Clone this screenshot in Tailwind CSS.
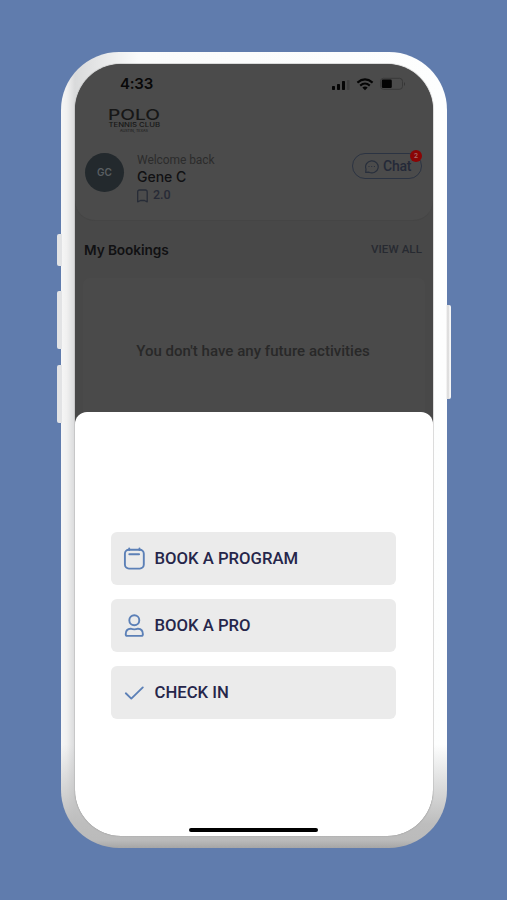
<!DOCTYPE html>
<html lang="en">
<head>
<meta charset="utf-8">
<title>Polo Tennis Club</title>
<script src="https://cdn.jsdelivr.net/npm/@tailwindcss/browser@4"></script>
</head>
<body class="bg-[#607cad]">
<div class="relative w-[507px] h-[900px] overflow-hidden pt-[52px] pl-[61px] font-[Roboto,sans-serif]">
  <!-- side buttons -->
  <div class="absolute left-[57px] top-[234px] w-[5px] h-[32px] rounded-l-[2px] bg-[#e2e3e5]"></div>
  <div class="absolute left-[57px] top-[291px] w-[5px] h-[58px] rounded-l-[2px] bg-[#e2e3e5]"></div>
  <div class="absolute left-[57px] top-[365px] w-[5px] h-[58px] rounded-l-[2px] bg-[#e2e3e5]"></div>
  <div class="absolute left-[446px] top-[305px] w-[5px] h-[94px] rounded-r-[2px] bg-[linear-gradient(90deg,#fbfbfb_0%,#d5d5d5_40%,#f6f6f6_75%)]"></div>

  <!-- device frame -->
  <div class="w-[386px] h-[796px] rounded-[58px] pt-[12px] pl-[14px] bg-[linear-gradient(180deg,#ffffff00_0%,#ffffff00_87%,#bdbdbd_97%,#bbbbbb_99%,#a6a6a6_100%),linear-gradient(90deg,#f6f6f6_0%,#f0f0f0_1.5%,#d9dadb_3.6%,#fafbfb_20%,#fdfefe_100%)]">
    <div class="relative w-[358px] h-[772px] rounded-[46px] overflow-hidden bg-[#484848] shadow-[0_0_0_1px_#a9a9a966]">
      <!-- dimmed home screen -->
      <header class="h-[157px] rounded-b-[20px] bg-[#4b4b4b] border-b border-[#454545]">
        <div class="flex items-center justify-between pl-[45px] pr-[27px] h-[40px]">
          <span class="font-[Inter,sans-serif] font-semibold text-[15px] tracking-[-.2px] text-[#080808]">4:33</span>
          <svg width="76" height="16" viewBox="0 0 76 16" class="mt-px">
            <g fill="#050505"><rect x="2" y="9" width="3" height="4" rx=".8"/><rect x="7" y="7" width="3" height="6" rx=".8"/><rect x="12" y="4" width="3" height="9" rx=".8"/></g>
            <rect x="17" y="3" width="2.5" height="10" rx=".8" fill="#3f3f3f"/>
            <g fill="none" stroke="#050505" stroke-width="2.1"><path d="M27.4 5.6Q35 -.8 42.600 5.6"/><path d="M30.200 8.600Q35 4.400 39.800 8.600"/></g>
            <path d="M32.300 10.600Q35 8.600 37.700 10.600L35 13.300Z" fill="#050505"/>
            <rect x="50.500" y="1.300" width="22" height="11" rx="3" fill="none" stroke="#393939"/>
            <rect x="51.800" y="2.600" width="10" height="8.400" rx="1.300" fill="#030303"/>
            <path d="M74 4.900v4q2-2 0-4" fill="#343434"/>
          </svg>
        </div>
        <div class="pl-[32px] h-[30px]">
          <svg width="56" height="30" viewBox="0 0 56 30" font-family="Inter, sans-serif" fill="#171717">
            <text x="1" y="15.500" font-size="14.500" font-weight="500" textLength="52" lengthAdjust="spacingAndGlyphs">POLO</text>
            <text x="1.500" y="23.200" font-size="6.300" font-weight="500" textLength="51.500" lengthAdjust="spacingAndGlyphs">TENNIS CLUB</text>
            <text x="13" y="27.500" font-size="3.300" textLength="28" lengthAdjust="spacingAndGlyphs">AUSTIN, TEXAS</text>
          </svg>
        </div>
        <div class="flex pt-[18px] pl-[10px] pr-[11px]">
          <div class="mt-px w-[39px] h-[39px] rounded-full bg-[#23292d] flex items-center justify-center font-[Inter,sans-serif] font-semibold text-[10px] text-[#5a5f62]">GC</div>
          <div class="ml-[13px] flex-1">
            <div class="text-[12px] leading-[16px] text-[#2c2c2c] tracking-[-.07px]">Welcome back</div>
            <div class="font-[Inter,sans-serif] font-medium text-[14px] leading-[17px] text-[#111113]">Gene C</div>
            <div class="flex items-center gap-[5px] h-[21px] text-[12.500px] font-medium text-[#272a36]">
              <svg width="11" height="14" viewBox="0 0 11 14" fill="none" stroke="#272c37" stroke-width="1.300" stroke-linejoin="round"><path d="M.7 12.800V3Q.7 1 2.700 1H8.200Q10.200 1 10.200 3V12.800L7.500 11.500H3.500Z"/></svg>2.0
            </div>
          </div>
          <div class="relative mt-px w-[70px] h-[26px] rounded-full border border-[#2b3342] flex items-center pl-[11px] gap-[4px] text-[14px] leading-[16px] font-medium tracking-[-.2px] text-[#242938]">
            <svg width="15" height="15" viewBox="0 0 15 15" fill="none" stroke="#282f3c" stroke-width="1.200"><path d="M1.700 13.400L2 10A6.300 6 0 1 1 5 13.200Z" stroke-linejoin="round"/><path d="M4.500 7.500h1M7.200 7.500h1M9.900 7.500h1"/></svg>Chat
            <span class="absolute right-[-1px] top-[-4px] size-[12px] rounded-full bg-[#8a0505] text-[#a87070] text-[7px] leading-[12px] text-center">2</span>
          </div>
        </div>
      </header>
      <section>
        <div class="flex items-center justify-between pl-[9px] pr-[11px] h-[57px]">
          <h2 class="pt-px font-[Inter,sans-serif] font-semibold text-[13.700px] text-[#111113] tracking-[-.1px]">My Bookings</h2>
          <span class="pt-px text-[11.500px] font-medium text-[#272a31] tracking-[.1px]">VIEW ALL</span>
        </div>
        <div class="mx-[8px] h-[150px] rounded-t-[6px] bg-[#4a4a4a] pt-[64px] pr-[2px] text-center text-[15px] leading-[18px] font-medium text-[#282828] tracking-[.03px]">You don't have any future activities</div>
      </section>

      <!-- bottom sheet -->
      <div class="absolute left-0 bottom-0 w-[358px] h-[424px] rounded-t-[12px] bg-white flex flex-col items-center pt-[120px]">
        <div class="flex flex-col gap-[14px] w-[285px] text-[16.700px] font-medium text-[#26264a] mr-[1px]">
          <div class="h-[53px] rounded-[6px] bg-[#ebebeb] flex items-center pl-[12px] gap-[8.500px]">
            <svg width="23" height="24" viewBox="0 0 23 24" fill="none" stroke="#5c80b7" stroke-width="1.900" stroke-linecap="round"><rect x="1.900" y="2.800" width="18.900" height="18.800" rx="4"/><path d="M6.200 1.500v1.500M16.500 1.500v1.500M6.300 7.300h9.800"/></svg>BOOK A PROGRAM
          </div>
          <div class="h-[53px] rounded-[6px] bg-[#ebebeb] flex items-center pl-[12px] gap-[8.500px]">
            <svg width="23" height="24" viewBox="0 0 23 24" fill="none" stroke="#5c80b7" stroke-width="1.900" stroke-linejoin="round"><circle cx="11.300" cy="6.200" r="5"/><path d="M2.700 20.300Q2.700 14.700 7.600 14.700Q11.300 16 15 14.700Q19.900 14.700 19.900 20.300Q19.900 21.900 18.300 21.900H4.300Q2.700 21.900 2.700 20.300Z"/></svg>BOOK A PRO
          </div>
          <div class="h-[53px] rounded-[6px] bg-[#ebebeb] flex items-center pl-[12px] gap-[8.500px]">
            <svg width="23" height="24" viewBox="0 0 23 24" fill="none" stroke="#5c80b7" stroke-width="1.900" stroke-linecap="round" stroke-linejoin="round"><path d="M2.800 12.300L8.300 17.600L19.800 6.400"/></svg>CHECK IN
          </div>
        </div>
        <div class="mt-auto mb-[4px] mr-[2px] w-[129px] h-[4px] rounded-full bg-black"></div>
      </div>
    </div>
  </div>
</div>
</body>
</html>
